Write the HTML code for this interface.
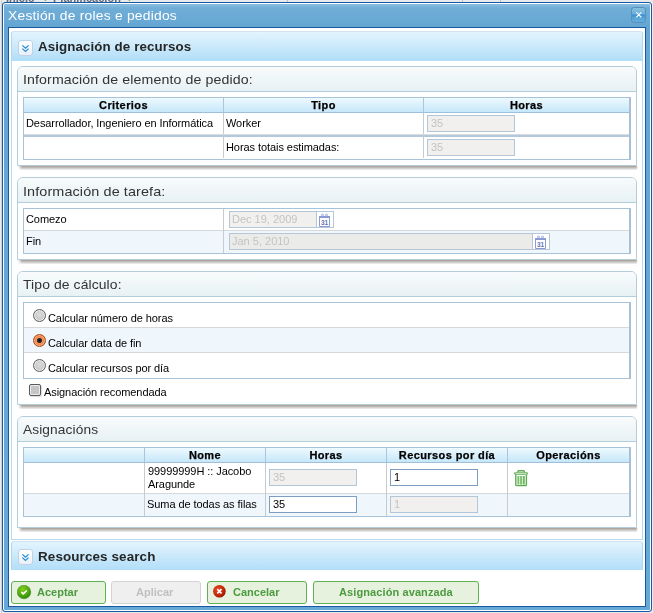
<!DOCTYPE html>
<html><head><meta charset="utf-8">
<style>
*{box-sizing:border-box;margin:0;padding:0}
html,body{width:653px;height:613px;overflow:hidden;background:#e8eaec;font-family:"Liberation Sans",sans-serif;}
div,span{position:absolute}
.t{white-space:nowrap;line-height:1;will-change:transform}
#dlg{left:2px;top:2px;width:650px;height:610px;border:1px solid #1759a4;border-radius:3px;background:linear-gradient(#86bbdd 2px,#70aed7 5px,#64a5d3 25px,#66a8d6);box-shadow:inset 0 0 0 1px #fafdff}
#content{left:8px;top:27px;width:638px;height:580px;border:1px solid #1a58a2;background:#fff}
.ph{border:1px solid #b0d9ef;border-top-color:#cfe3ee;border-bottom:0;border-radius:3px 3px 0 0;background:linear-gradient(#e3f4fd,#cdeafb 45%,#b1def9)}
.tog{width:15px;height:16px;border:1px solid #bfd3e6;border-radius:3px;background:linear-gradient(#ffffff,#e9eff9)}
.pt{font-weight:bold;font-size:12.5px;color:#262626}
.gb{border:1px solid #b3cdda;border-radius:6px 6px 0 0;background:#fff}
.sh{height:4px;background:linear-gradient(#a49c94,#bdb8b3 35%,#d9d8d7 70%,#f2f2f2);-webkit-mask:linear-gradient(90deg,transparent 0,#000 4px,#000 calc(100% - 2px),transparent)}
.gh{left:0;top:0;width:100%;height:25px;border-bottom:1px solid #b3cdda;background:linear-gradient(#f8fbfc,#e7f1f4);border-radius:5px 5px 0 0}
.gt{font-size:13px;color:#333}
.b{font-size:11px;color:#000;letter-spacing:-0.07px}
.hb{font-weight:bold;font-size:11px;color:#000;text-align:center;letter-spacing:0.4px;-webkit-text-stroke:0.25px #000}
.hdr{background:linear-gradient(#eefaff,#dcf1fc 45%,#c6e7f9);border-bottom:1px solid #9fc0da}
.vl{width:1px;background:#c8cbce}
.vlh{width:1px;background:#a9c6dd}
.inp{border:1px solid #b5c7d6;background:#f1f0ee;height:17px}
.inpe{border:1px solid #7d9ec0;background:#fff;height:17px}
.it{font-size:11px;color:#c3c3c3}
.btn{top:581px;height:23px;border:1px solid #5db352;border-radius:3px;background:#e6f2dd}
.bt{font-weight:bold;font-size:11px;color:#4c9a40}
.rad{width:13px;height:13px;border-radius:50%;border:1px solid #5e5e5e;background:radial-gradient(circle at 50% 40%,#dcdcdc,#c2c2c2 80%);box-shadow:inset 0 0 0 1px #ececec}
.sel{border-color:#a8481a;background:radial-gradient(circle at 50% 50%,#0c0c0c 0,#333 2.2px,#f7935a 2.9px,#f07c3c 4.6px,#e56a2c 6px);box-shadow:inset 0 0 0 1px #fbb080}
.chk{width:12px;height:12px;border:1px solid #5a5a5a;border-radius:2px;background:#c5c5c5;box-shadow:inset 0 0 0 1px #ececec,1px 1px 1px rgba(0,0,0,0.15)}
</style></head><body>
<div style="left:1px;top:0;width:1px;height:613px;background:#cfd3d6"></div>
<div class="t" style="left:6px;top:-7px;font-size:11px;font-weight:bold;color:#5f6f82">Inicio</div>
<div class="t" style="left:44px;top:-7px;font-size:11px;font-weight:bold;color:#7ab848">›</div>
<div class="t" style="left:53px;top:-7px;font-size:11px;font-weight:bold;color:#5f6f82">Planificación</div>
<div class="t" style="left:128px;top:-7px;font-size:11px;font-weight:bold;color:#7ab848">›</div>
<div style="left:287px;top:0;width:1px;height:2px;background:#b9c3cc"></div>
<div style="left:462px;top:0;width:1px;height:2px;background:#b9c3cc"></div>
<div style="left:500px;top:0;width:1px;height:2px;background:#b9c3cc"></div>
<div id="dlg"></div>
<div class="t" id="title" style="left:8px;top:10px;color:#fff;font-size:12.5px;letter-spacing:0.2px;transform:scaleX(1.108);transform-origin:0 0">Xestión de roles e pedidos</div>
<div id="close" style="left:631px;top:7px;width:15px;height:16px;border:1px solid #5b8fb9;border-radius:3px;background:linear-gradient(#86c0de,#6eb0dc 40%,#3b91d2 52%,#55a5d8 70%,#62aedb)">
<svg width="13" height="14" style="position:absolute;left:0;top:0"><path d="M4.6 4.6L9 9M9 4.6L4.6 9" stroke="#fff" stroke-width="1.1" stroke-linecap="round"/></svg></div>
<div id="content"></div>

<!-- panel 1 -->
<div class="ph" style="left:11px;top:31px;width:632px;height:30px"></div>
<div style="left:11px;top:61px;width:632px;height:479px;border:1px solid #b7dcf1;border-top:0"></div>
<div class="tog" style="left:18px;top:40px"><svg width="13" height="14" style="position:absolute;left:0;top:0"><path d="M3.4 4.4L6.5 7.2L9.6 4.4M3.4 7.6L6.5 10.4L9.6 7.6" fill="none" stroke="#1f8ad2" stroke-width="1.2"/></svg></div>
<div class="t pt" style="left:38px;top:41px;letter-spacing:0.1px;transform:scaleX(1.065);transform-origin:0 0">Asignación de recursos</div>

<!-- group 1 -->
<div class="gb" style="left:17px;top:66px;width:620px;height:100px"><div class="gh"></div></div>
<div class="sh" style="left:18px;top:166px;width:620px"></div>
<div class="t gt" style="left:23px;top:72.6px;letter-spacing:0.1px;transform:scaleX(1.09);transform-origin:0 0">Información de elemento de pedido:</div>
<div style="left:23px;top:97px;width:608px;height:63px;border:1px solid #a6c3d9;border-right:2px solid #a9c0d2"></div>
<div class="hdr" style="left:24px;top:98px;width:605px;height:15px"></div>
<div class="vlh" style="left:223px;top:98px;height:14px"></div>
<div class="vlh" style="left:423px;top:98px;height:14px"></div>
<div class="vl" style="left:223px;top:113px;height:45px"></div>
<div class="vl" style="left:423px;top:113px;height:45px"></div>
<div style="left:24px;top:134px;width:605px;height:1px;background:#d9dde0"></div>
<div style="left:24px;top:135px;width:605px;height:2px;background:#b3c8db"></div>
<div class="t hb" style="left:24px;width:199px;top:100px">Criterios</div>
<div class="t hb" style="left:224px;width:199px;top:100px">Tipo</div>
<div class="t hb" style="left:424px;width:205px;top:100px">Horas</div>
<div class="t b" style="left:26px;top:118px;letter-spacing:-0.08px">Desarrollador, Ingeniero en Informática</div>
<div class="t b" style="left:226px;top:118px">Worker</div>
<div class="t b" style="left:226px;top:142px">Horas totais estimadas:</div>
<div class="inp" style="left:427px;top:115px;width:88px"></div>
<div class="t it" style="left:431px;top:118px">35</div>
<div class="inp" style="left:427px;top:139px;width:88px"></div>
<div class="t it" style="left:431px;top:142px">35</div>

<!-- group 2 -->
<div class="gb" style="left:17px;top:177px;width:620px;height:83px"><div class="gh"></div></div>
<div class="sh" style="left:18px;top:260px;width:620px"></div>
<div class="t gt" style="left:23px;top:184.6px;letter-spacing:0.1px;transform:scaleX(1.107);transform-origin:0 0">Información de tarefa:</div>
<div style="left:23px;top:208px;width:608px;height:46px;border:1px solid #a6c3d9;border-right:2px solid #a9c0d2"></div>
<div style="left:24px;top:231px;width:605px;height:22px;background:#eff7fd"></div>
<div style="left:24px;top:230px;width:605px;height:1px;background:#d6d9dc"></div>
<div class="vl" style="left:223px;top:209px;height:44px"></div>
<div class="t b" style="left:26px;top:214px">Comezo</div>
<div class="t b" style="left:26px;top:236px">Fin</div>
<div class="inp" style="left:229px;top:211px;width:88px"></div>
<div class="t it" style="left:232px;top:214px;font-size:11px">Dec 19, 2009</div>
<div style="left:316px;top:211px;width:18px;height:17px;border:1px solid #b5c7d6;background:#fff"></div>
<svg style="position:absolute;left:318px;top:213px" width="14" height="15"><rect x="1" y="3" width="11" height="2" fill="#8b9ad3"/><circle cx="4.5" cy="2" r="1" fill="none" stroke="#9aa8da" stroke-width="0.9"/><circle cx="8.5" cy="2" r="1" fill="none" stroke="#9aa8da" stroke-width="0.9"/><path d="M1.5 4.5V13.5H11.5V4.5" fill="none" stroke="#8b9ad3" stroke-width="1"/><text x="6.6" y="12.2" font-size="6.5" font-family="Liberation Sans" fill="#6675b5" text-anchor="middle" font-weight="bold">31</text></svg>
<div class="inp" style="left:229px;top:233px;width:304px;background:#ebebea"></div>
<div class="t it" style="left:232px;top:236px">Jan 5, 2010</div>
<div style="left:532px;top:233px;width:18px;height:17px;border:1px solid #b5c7d6;background:#fff"></div>
<svg style="position:absolute;left:534px;top:235px" width="14" height="15"><rect x="1" y="3" width="11" height="2" fill="#8b9ad3"/><circle cx="4.5" cy="2" r="1" fill="none" stroke="#9aa8da" stroke-width="0.9"/><circle cx="8.5" cy="2" r="1" fill="none" stroke="#9aa8da" stroke-width="0.9"/><path d="M1.5 4.5V13.5H11.5V4.5" fill="none" stroke="#8b9ad3" stroke-width="1"/><text x="6.6" y="12.2" font-size="6.5" font-family="Liberation Sans" fill="#6675b5" text-anchor="middle" font-weight="bold">31</text></svg>

<!-- group 3 -->
<div class="gb" style="left:17px;top:271px;width:620px;height:134px"><div class="gh"></div></div>
<div class="sh" style="left:18px;top:405px;width:620px"></div>
<div class="t gt" style="left:23px;top:278.4px;letter-spacing:0.1px;transform:scaleX(1.07);transform-origin:0 0">Tipo de cálculo:</div>
<div style="left:23px;top:302px;width:608px;height:77px;border:1px solid #a6c3d9;border-right:2px solid #a9c0d2"></div>
<div style="left:24px;top:328px;width:605px;height:24px;background:#eff7fd"></div>
<div style="left:24px;top:327px;width:605px;height:1px;background:#d6d9dc"></div>
<div style="left:24px;top:352px;width:605px;height:1px;background:#d6d9dc"></div>
<div class="rad" style="left:33px;top:309px"></div>
<div class="rad sel" style="left:33px;top:334px"></div>
<div class="rad" style="left:33px;top:359px"></div>
<div class="t b" style="left:48px;top:313px">Calcular número de horas</div>
<div class="t b" style="left:48px;top:338px">Calcular data de fin</div>
<div class="t b" style="left:48px;top:363px">Calcular recursos por día</div>
<div class="chk" style="left:29px;top:384px"></div>
<div class="t b" style="left:44px;top:387px">Asignación recomendada</div>

<!-- group 4 -->
<div class="gb" style="left:17px;top:416px;width:620px;height:112px"><div class="gh"></div></div>
<div class="sh" style="left:18px;top:528px;width:620px"></div>
<div class="t gt" style="left:23px;top:423px;letter-spacing:0.1px;transform:scaleX(1.055);transform-origin:0 0">Asignacións</div>
<div style="left:23px;top:447px;width:608px;height:70px;border:1px solid #a6c3d9;border-right:2px solid #a9c0d2"></div>
<div class="hdr" style="left:24px;top:448px;width:605px;height:15px"></div>
<div style="left:24px;top:494px;width:605px;height:22px;background:#eff7fd"></div>
<div style="left:24px;top:493px;width:605px;height:1px;background:#d6d9dc"></div>
<div class="vlh" style="left:144px;top:448px;height:14px"></div>
<div class="vlh" style="left:265px;top:448px;height:14px"></div>
<div class="vlh" style="left:386px;top:448px;height:14px"></div>
<div class="vlh" style="left:507px;top:448px;height:14px"></div>
<div class="vl" style="left:144px;top:463px;height:53px"></div>
<div class="vl" style="left:265px;top:463px;height:53px"></div>
<div class="vl" style="left:386px;top:463px;height:53px"></div>
<div class="vl" style="left:507px;top:463px;height:53px"></div>
<div class="t hb" style="left:145px;width:120px;top:450px">Nome</div>
<div class="t hb" style="left:266px;width:120px;top:450px">Horas</div>
<div class="t hb" style="left:387px;width:120px;top:450px">Recursos por día</div>
<div class="t hb" style="left:508px;width:121px;top:450px">Operacións</div>
<div class="b" style="left:148px;top:465px;line-height:13px;white-space:nowrap;will-change:transform">99999999H :: Jacobo<br>Aragunde</div>
<div class="inp" style="left:269px;top:469px;width:88px"></div>
<div class="t it" style="left:273px;top:472px">35</div>
<div class="inpe" style="left:390px;top:469px;width:88px"></div>
<div class="t b" style="left:394px;top:472px">1</div>
<svg style="position:absolute;left:513px;top:469px" width="16" height="18"><path d="M4.8 3.5V2.6Q4.8 1.8 5.6 1.8H10.6Q11.4 1.8 11.4 2.6V3.5" fill="none" stroke="#5dab53" stroke-width="1.4"/><rect x="1.2" y="3.2" width="13.6" height="2.6" rx="0.8" fill="#5dab53"/><rect x="2.5" y="3.9" width="11" height="0.9" fill="#d8eed2"/><path d="M2.8 6V15.8Q2.8 16.6 3.6 16.6H12.6Q13.4 16.6 13.4 15.8V6" fill="#fff" stroke="#5dab53" stroke-width="1.4"/><rect x="4.4" y="7" width="2" height="8.6" fill="#7dc16f"/><rect x="7.1" y="7" width="2" height="8.6" fill="#7dc16f"/><rect x="9.8" y="7" width="2" height="8.6" fill="#6db85f"/></svg>
<div class="t b" style="left:147px;top:499px">Suma de todas as filas</div>
<div class="inpe" style="left:269px;top:496px;width:88px"></div>
<div class="t b" style="left:273px;top:499px">35</div>
<div class="inp" style="left:390px;top:496px;width:88px"></div>
<div class="t it" style="left:394px;top:499px">1</div>

<!-- panel 2 -->
<div class="ph" style="left:11px;top:541px;width:632px;height:29px"></div>
<div class="tog" style="left:18px;top:549px"><svg width="13" height="14" style="position:absolute;left:0;top:0"><path d="M3.4 4.4L6.5 7.2L9.6 4.4M3.4 7.6L6.5 10.4L9.6 7.6" fill="none" stroke="#1f8ad2" stroke-width="1.2"/></svg></div>
<div class="t pt" style="left:38px;top:551px;letter-spacing:0.1px;transform:scaleX(1.075);transform-origin:0 0">Resources search</div>

<!-- buttons -->
<div class="btn" style="left:11px;width:95px"></div>
<svg style="position:absolute;left:17px;top:585px" width="15" height="15"><defs><radialGradient id="gg" cx="0.4" cy="0.3" r="0.7"><stop offset="0" stop-color="#82cc1a"/><stop offset="0.6" stop-color="#55aa14"/><stop offset="1" stop-color="#2f880a"/></radialGradient></defs><circle cx="7" cy="7" r="6.8" fill="url(#gg)" stroke="#3a8e12" stroke-width="0.5"/><path d="M4.4 7.2L6.2 8.9L9.8 5.5" fill="none" stroke="#fff" stroke-width="1.7"/></svg>
<div class="t bt" style="left:37px;top:587px">Aceptar</div>
<div class="btn" style="left:111px;width:90px;border-color:#d2d2d2;background:#efefef"></div>
<div class="t bt" style="left:136px;top:587px;color:#c0c0c0">Aplicar</div>
<div class="btn" style="left:207px;width:100px"></div>
<svg style="position:absolute;left:213px;top:585px" width="14" height="14"><defs><radialGradient id="rg" cx="0.35" cy="0.35" r="0.75"><stop offset="0" stop-color="#e2481e"/><stop offset="0.6" stop-color="#c42a0c"/><stop offset="1" stop-color="#8e1206"/></radialGradient></defs><circle cx="6.4" cy="6.3" r="6.3" fill="url(#rg)"/><path d="M4.3 4.2L8.5 8.4M8.5 4.2L4.3 8.4" fill="none" stroke="#fff" stroke-width="1.7"/></svg>
<div class="t bt" style="left:233px;top:587px">Cancelar</div>
<div class="btn" style="left:313px;width:166px"></div>
<div class="t bt" style="left:339px;top:587px;letter-spacing:0.1px">Asignación avanzada</div>
</body></html>
